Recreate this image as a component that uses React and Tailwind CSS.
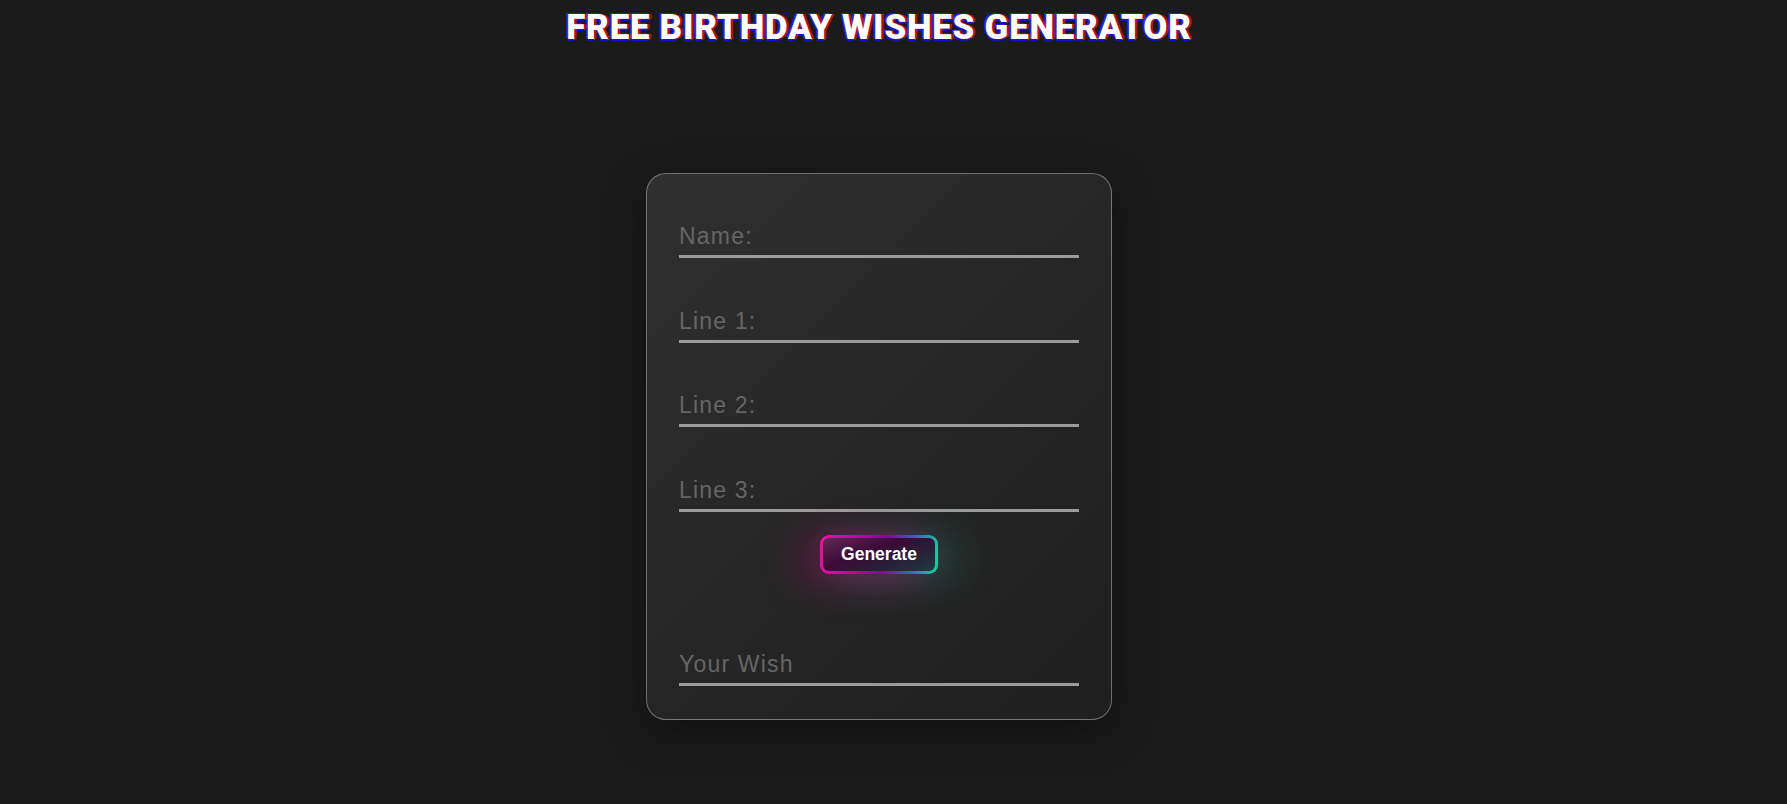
import React from "react";

function Field({ placeholder }) {
  return (
    <input
      type="text"
      placeholder={placeholder}
      className="block w-[400px] h-[40px] bg-transparent border-0 border-b-[3px] border-solid border-[#9b9b9b] outline-none text-[23px] tracking-[1.2px] text-[#cfcfcf] placeholder:text-[#666666] p-0 font-['Liberation_Sans',Arial,sans-serif]"
    />
  );
}

export default function App() {
  return (
    <div className="min-h-screen w-full bg-[#1b1b1b] font-['Liberation_Sans',Arial,sans-serif]">
      <div className="flex justify-center pr-[29px] pt-[7px]">
        <h1 className="text-[35px] leading-[42px] tracking-[0.7px] font-black text-white [text-shadow:2px_0_0_#d00000,-1.5px_-1px_0_#2020ff,0_1.5px_0_#1010dd,1px_1px_0_#00b000] font-['Roboto','Liberation_Sans',sans-serif] whitespace-nowrap">
          FREE BIRTHDAY WISHES GENERATOR
        </h1>
      </div>
      <div className="flex justify-center pr-[29px] mt-[124px]">
        <div className="w-[466px] h-[547px] rounded-[20px] border border-solid border-white/35 bg-[linear-gradient(135deg,#303030_0%,#262626_50%,#1f1f1f_100%)] shadow-[0_12px_40px_rgba(0,0,0,0.45)] px-[32px] pt-[44px] pb-[33px] flex flex-col">
          <div className="flex flex-col gap-[44.67px]">
            <Field placeholder="Name:" />
            <Field placeholder="Line 1:" />
            <Field placeholder="Line 2:" />
            <Field placeholder="Line 3:" />
          </div>
          <div className="flex justify-center mt-[23px]">
            <div className="p-[3px] rounded-[9px] bg-[linear-gradient(100deg,#f0109a_0%,#c0069c_30%,#7a0aa0_55%,#3a6ab0_78%,#12d89e_100%)] shadow-[-16px_4px_40px_rgba(236,0,140,0.38),16px_4px_40px_rgba(20,200,170,0.28)]">
              <button className="w-[112px] h-[33px] rounded-[6px] bg-[linear-gradient(160deg,#5a2f55_0%,#3d0a38_40%,#2a1c36_65%,#1f3a3f_100%)] text-white font-bold text-[17.5px] leading-none flex items-center justify-center font-['Liberation_Sans',Arial,sans-serif]">
                Generate
              </button>
            </div>
          </div>
          <div className="mt-[72px]">
            <Field placeholder="Your Wish" />
          </div>
        </div>
      </div>
    </div>
  );
}
